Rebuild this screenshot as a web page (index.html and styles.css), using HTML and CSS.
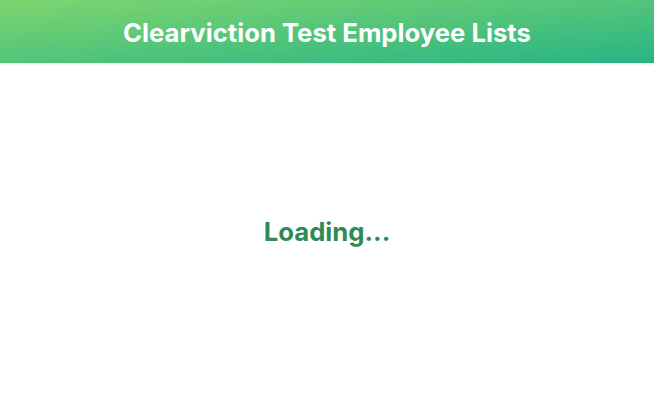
FILE: index.html
```html
<!DOCTYPE html>
<html>
<head>
<meta charset="utf-8">
<link rel="stylesheet" href="styles.css">
</head>
<body>
<div class="app">
  <header class="header">
    <h1 class="title">Clearviction Test Employee Lists</h1>
  </header>
  <main class="main">
    <p class="loading">Loading...</p>
  </main>
</div>
</body>
</html>
```
FILE: styles.css
```css
html, body {
  margin: 0;
  padding: 0;
  height: 100%;
  background: #fff;
  font-family: Inter, "Noto Sans", sans-serif;
}
.app {
  display: flex;
  flex-direction: column;
  height: 100%;
}
.header {
  height: 63px;
  background: linear-gradient(to right bottom, #7ed56f, #28b485);
  display: flex;
  align-items: center;
  justify-content: center;
  box-shadow: 0 1px 3px rgba(0,0,0,0.12);
}
.title {
  margin: 0;
  padding-top: 2px;
  color: #fff;
  font-size: 25.7px;
  font-weight: 700;
}
.main {
  flex: 1;
  display: flex;
  align-items: center;
  justify-content: center;
}
.loading {
  margin: 0 0 2px;
  color: #2e8b57;
  font-size: 25.7px;
  font-weight: 700;
}
```
